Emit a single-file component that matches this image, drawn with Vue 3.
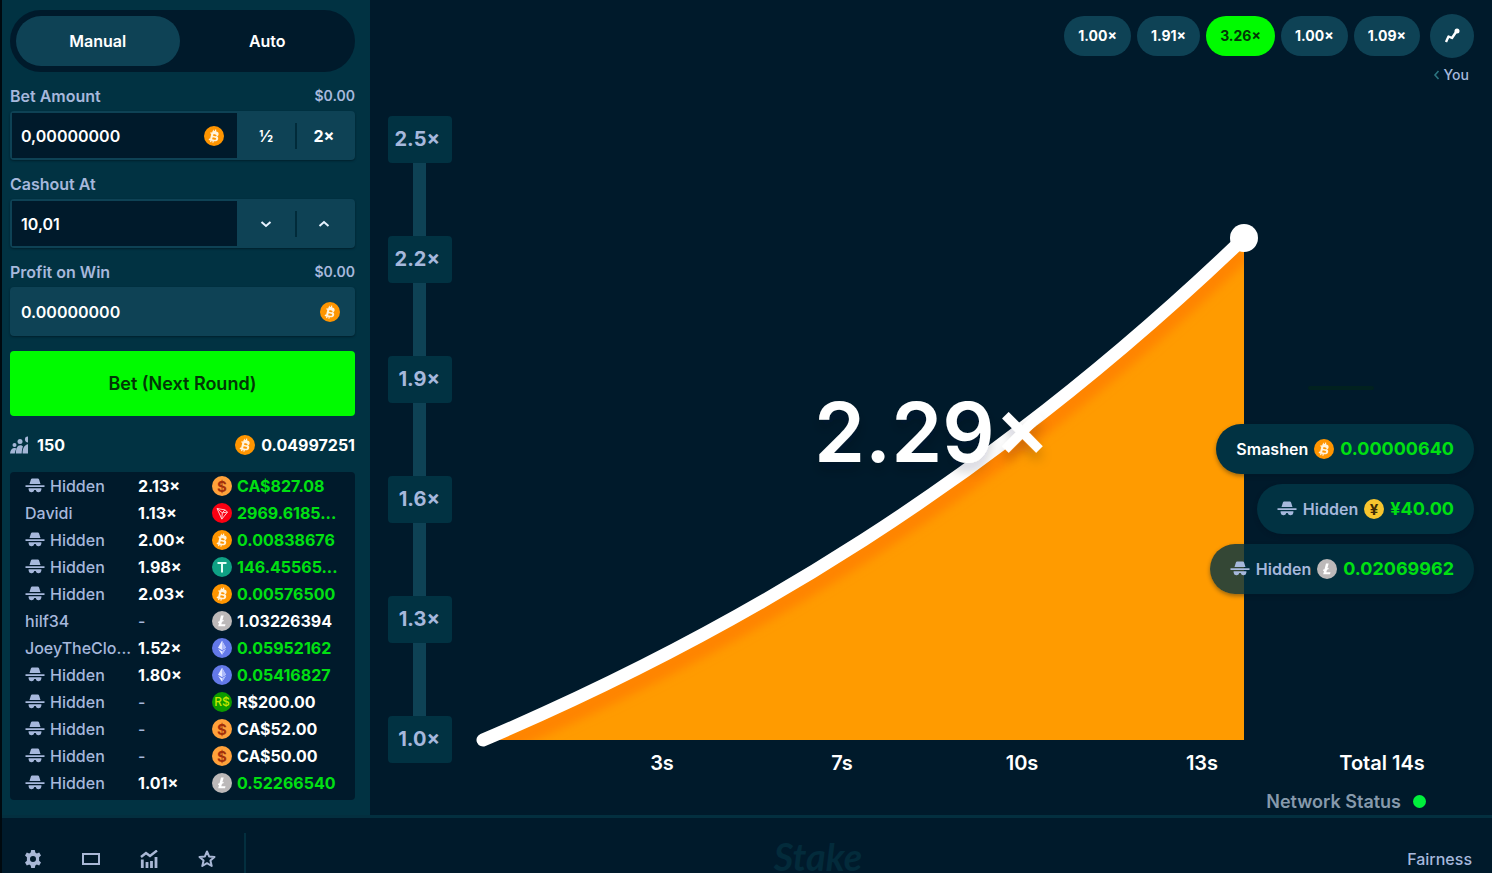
<script setup>
import { ref, h } from 'vue'

const bet = ref('0,00000000')
const cashout = ref('10,01')
const profit = ref('0.00000000')

const COINS = {
  btc: { bg: '#ff9500', fg: '#fff3dc', d: 'M8.6 4.9l-.4 1.7-1.7-.3-.2 1.2 1 .3-1.2 5-1-.2-.5 1.3 1.8.5-.4 1.6 1.2.3.4-1.6 1 .2-.4 1.6 1.2.3.4-1.6c2.2.3 3.800-.1 4.300-2 .4-1.500-.1-2.400-1.100-3 .9-.2 1.500-.8 1.600-2 .2-1.600-.9-2.300-2.600-2.900l.4-1.600-1.200-.3-.4 1.600-1-.2.4-1.600zM9.600 8l1.800.4c1.800.5 1.400 2.200-.3 1.900l-2.100-.5zM8.700 11.200l2.300.6c1.900.5 1.500 2.400-.5 2l-2.400-.6z' },
  cad: { bg: '#ffa13a', fg: '#a3300b', text: '$' },
  trx: { bg: '#fb0012', fg: '#ffc9cc', line: 'M5 5.500l8 1.400 2.500 2.200-5.700 7zM5 5.500l5.300 4.300-.5 6.300M10.300 9.800L13 6.900M10.300 9.800l5.200-.7' },
  usdt: { bg: '#0fa184', fg: '#e4fff6', line: 'M5.500 6h9M10 6v9.500' },
  ltc: { bg: '#bcb9b9', fg: '#ffffff', d: 'M9 4.500h2.700l-1.300 4.800 1.400-.5-.4 1.500-1.400.5-.7 2.400h4.200l-.5 2H6.200l.9-3.500-1.200.4.4-1.500 1.200-.4z' },
  eth: { bg: '#6379e8', fg: '#e8ecff', d: 'M10 2.800l4 6.900-4 2.300-4-2.300zM6.200 11l3.800 2.200L13.800 11 10 16.800z' },
  brl: { bg: '#0c9a00', fg: '#c4e800', text: 'R$' },
  jpy: { bg: '#f7c52e', fg: '#3d2b05', text: '¥' },
  none: { bg: '#d5e2e6', fg: '#ffffff' }
}

const Coin = (props) => {
  const c = COINS[props.type]
  const inner = [h('circle', { cx: 10, cy: 10, r: 10, fill: c.bg })]
  if (c.d) inner.push(h('path', { d: c.d, fill: c.fg, 'fill-rule': 'evenodd' }))
  if (props.type === 'eth') inner.push(h('path', { d: 'M10 2.800v9.200l4-2.300zM10 13.200v3.600l3.800-5.800z', fill: '#aebafa' }))
  if (c.line) inner.push(h('path', { d: c.line, fill: 'none', stroke: c.fg, 'stroke-width': props.type === 'usdt' ? 2 : 1 }))
  if (c.text) {
    inner.push(h('text', {
      x: 10, y: c.text.length > 1 ? 14 : 15.500, 'text-anchor': 'middle', fill: c.fg,
      'font-size': c.text.length > 1 ? 12 : 15, 'font-weight': c.text.length > 1 ? 500 : 700, 'font-family': 'Inter, sans-serif'
    }, c.text))
  }
  return h('svg', { viewBox: '0 0 20 20', width: 20, height: 20, 'aria-hidden': 'true' }, inner)
}
Coin.props = ['type']

const Spy = () => h('svg', { viewBox: '0 0 20 16', width: 20, height: 16, fill: 'currentColor', 'aria-hidden': 'true' }, [
  h('path', { d: 'M5.900 1.600Q6.200.6 7.200.6h5.600q1 0 1.300 1L15.500 6h-11zM.5 7.300h19v1.700H.5zM3.600 10.200h12.800v1.300a2.900 2.900 0 0 1-5.700.6H9.300a2.900 2.900 0 0 1-5.700-.6z' })
])

const rows = [
  { m: '2.13×', c: 'cad', a: 'CA$827.08', win: true },
  { n: 'Davidi', m: '1.13×', c: 'trx', a: '2969.6185...', win: true },
  { m: '2.00×', c: 'btc', a: '0.00838676', win: true },
  { m: '1.98×', c: 'usdt', a: '146.45565...', win: true },
  { m: '2.03×', c: 'btc', a: '0.00576500', win: true },
  { n: 'hilf34', c: 'ltc', a: '1.03226394' },
  { n: 'JoeyTheClo...', m: '1.52×', c: 'eth', a: '0.05952162', win: true },
  { m: '1.80×', c: 'eth', a: '0.05416827', win: true },
  { c: 'brl', a: 'R$200.00' },
  { c: 'cad', a: 'CA$52.00' },
  { c: 'cad', a: 'CA$50.00' },
  { m: '1.01×', c: 'ltc', a: '0.52266540', win: true }
]

const rounds = ['1.00×', '1.91×', '3.26×', '1.00×', '1.09×']
const yTicks = ['2.5×', '2.2×', '1.9×', '1.6×', '1.3×', '1.0×']
const xTicks = ['3s', '7s', '10s', '13s', 'Total 14s']
const cashouts = [
  { n: 'Smashen', c: 'btc', a: '0.00000640' },
  { c: 'jpy', a: '¥40.00' },
  { c: 'ltc', a: '0.02069962', faded: true }
]
</script>

<template>
  <div class="app">
    <div class="game">
      <aside class="sidebar">
        <div class="tabs">
          <button type="button" class="tab active">Manual</button>
          <button type="button" class="tab">Auto</button>
        </div>

        <div class="label-row"><label for="bet">Bet Amount</label><span class="fiat">$0.00</span></div>
        <div class="field">
          <div class="entry">
            <input id="bet" v-model="bet" type="text" />
            <Coin type="btc" />
          </div>
          <button type="button" class="side">½</button>
          <button type="button" class="side split">2×</button>
        </div>

        <div class="label-row"><label for="cashout">Cashout At</label></div>
        <div class="field">
          <div class="entry"><input id="cashout" v-model="cashout" type="text" /></div>
          <button type="button" class="side" aria-label="Decrease">
            <svg width="12" height="8" viewBox="0 0 12 8"><path d="M1.500 2L6 6l4.500-4" fill="none" stroke="#e6f2ff" stroke-width="2" /></svg>
          </button>
          <button type="button" class="side split" aria-label="Increase">
            <svg width="12" height="8" viewBox="0 0 12 8"><path d="M1.500 6L6 2l4.500 4" fill="none" stroke="#e6f2ff" stroke-width="2" /></svg>
          </button>
        </div>

        <div class="label-row"><label for="profit">Profit on Win</label><span class="fiat">$0.00</span></div>
        <div class="field readonly">
          <div class="entry">
            <input id="profit" v-model="profit" type="text" readonly />
            <Coin type="btc" />
          </div>
        </div>

        <button type="button" class="bet">Bet (Next Round)</button>

        <div class="stats">
          <svg class="crowd" width="18" height="18" viewBox="0 0 18 18" fill="#a3b5d6">
            <circle cx="4.500" cy="9" r="2" /><circle cx="10" cy="5.500" r="2.500" /><path d="M15 3a2.500 2.500 0 0 1 3-2.500v6A3 3 0 0 1 15 3z" />
            <path d="M0 17.500c.3-3.500 2-5.500 4.500-5.500 1 0 1.500.3 2 .8-1 1.300-1.500 3-1.700 4.700zM5.800 17.500c.2-5 1.600-8.300 4.500-8.300 1.100 0 2 .5 2.700 1.300-.9 2-1.200 4.500-1.300 7zM12.600 17.500c0-5.500 1.900-8.700 5.400-9.300v9.300z" />
          </svg>
          <span>150</span>
          <span class="pool"><Coin type="btc" />0.04997251</span>
        </div>

        <div class="bets">
          <table>
            <tbody>
              <tr v-for="(r, i) in rows" :key="i">
                <td class="who"><span class="cell"><template v-if="r.n">{{ r.n }}</template><template v-else><Spy />Hidden</template></span></td>
                <td class="mult" :class="{ none: !r.m }">{{ r.m || '-' }}</td>
                <td class="amt" :class="{ win: r.win }"><span class="cell"><Coin :type="r.c" />{{ r.a }}</span></td>
              </tr>
              <tr><td></td><td></td><td><span class="cell"><Coin type="none" /></span></td></tr>
            </tbody>
          </table>
        </div>
      </aside>

      <main class="stage">
        <div class="history">
          <button v-for="(r, i) in rounds" :key="i" type="button" class="round" :class="{ hit: i === 2 }">{{ r }}</button>
          <button type="button" class="trend" aria-label="Trends">
            <svg width="18" height="18" viewBox="0 0 18 18"><path d="M3 15l2.500-5.500L9 11l4-6" fill="none" stroke="#fff" stroke-width="2.400" stroke-linejoin="round" /><circle cx="14" cy="4" r="2.500" fill="#fff" /></svg>
          </button>
        </div>
        <div class="you">
          <svg width="7" height="10" viewBox="0 0 7 10"><path d="M5.500 1L2 5l3.500 4" fill="none" stroke="#2b7480" stroke-width="1.600" /></svg>
          <span>You</span>
        </div>

        <div class="chart">
          <div class="y-axis"><span v-for="t in yTicks" :key="t">{{ t }}</span></div>
          <div class="plot">
            <svg class="curve" viewBox="0 0 1040 634">
              <defs>
                <clipPath id="area"><path d="M31 624C285 516 538 366 792 122V624Z" /></clipPath>
                <filter id="soft" x="-10%" y="-10%" width="120%" height="120%"><feGaussianBlur stdDeviation="5" /></filter>
                <filter id="drop" x="-10%" y="-20%" width="120%" height="160%"><feDropShadow dx="0" dy="8" stdDeviation="6" flood-color="#001020" flood-opacity="0.2" /></filter>
              </defs>
              <path d="M31 624C285 516 538 366 792 122V624Z" fill="#ff9b00" />
              <g clip-path="url(#area)">
                <path d="M31 636C285 528 538 378 792 134" fill="none" stroke="#ff8400" stroke-width="20" filter="url(#soft)" />
              </g>
              <path d="M31 624C285 516 538 366 792 122" fill="none" stroke="#fff" stroke-width="13" stroke-linecap="round" />
              <circle cx="792" cy="122" r="14" fill="#fff" />
              <text class="now" x="362" y="346" filter="url(#drop)">2.29×</text>
            </svg>
            <div class="x-axis"><span v-for="t in xTicks" :key="t">{{ t }}</span></div>
          </div>
          <div class="cashouts">
            <i class="fading"></i>
            <div v-for="(c, i) in cashouts" :key="i" class="bubble" :class="{ faded: c.faded }">
              <Spy v-if="!c.n" />
              <span :class="{ named: c.n }">{{ c.n || 'Hidden' }}</span>
              <Coin :type="c.c" />
              <b>{{ c.a }}</b>
            </div>
          </div>
        </div>

        <div class="network">Network Status<i></i></div>
      </main>
    </div>

    <footer class="footer">
      <div class="tools">
        <button type="button" aria-label="Settings">
          <svg width="18" height="18" viewBox="0 0 18 18"><path fill="#a9b8d6" fill-rule="evenodd" d="M7.200 0h3.600l.5 2.500 1.500.9 2.400-.9L17 5.600l-1.900 1.700v1.700 1.700l1.900 1.700-1.800 3.100-2.400-.9-1.500.9-.5 2.500H7.200l-.5-2.500-1.500-.9-2.400.9L1 12.400l1.900-1.700V7.300L1 5.600l1.800-3.100 2.400.9 1.500-.9zM9 6a3 3 0 1 0 0 6 3 3 0 0 0 0-6z" /></svg>
        </button>
        <button type="button" aria-label="Theatre">
          <svg width="18" height="18" viewBox="0 0 18 18"><path fill="none" stroke="#a9b8d6" stroke-width="2" d="M1 4h16v10H1z" /></svg>
        </button>
        <button type="button" aria-label="Live stats">
          <svg width="18" height="18" viewBox="0 0 18 18" fill="none" stroke="#a9b8d6"><path stroke-width="2.400" d="M1 7l5-4 4 3 7-5.500" /><path stroke-width="2.800" d="M2.300 9.500V18M7 12v6M11.500 11v7M16 7v11" /></svg>
        </button>
        <button type="button" aria-label="Favourite">
          <svg width="18" height="18" viewBox="0 0 18 18"><path fill="none" stroke="#a9b8d6" stroke-width="2" stroke-linejoin="round" d="M9 1.500l2.100 4.900 5.400.5-4.100 3.600 1.300 5.500L9 13.200 4.300 16l1.300-5.500L1.500 6.900l5.400-.5z" /></svg>
        </button>
      </div>
      <span class="brand">Stake</span>
      <a href="#" class="fairness">Fairness</a>
    </footer>
  </div>
</template>

<style>
body {
  margin: 0;
  background: #001a2b;
}
</style>

<style scoped>
* {
  box-sizing: border-box;
}

.app {
  display: flex;
  flex-direction: column;
  height: 100vh;
  overflow: hidden;
  border-left: 2px solid #00090f;
  background: #001a2b;
  color: #fff;
  font: 600 16px/20px Inter, "Open Sans", sans-serif;
}

button,
input {
  border: 0;
  margin: 0;
  padding: 0;
  background: none;
  color: inherit;
  font: inherit;
}

svg {
  display: block;
  flex: none;
}

.game {
  display: grid;
  grid-template-columns: 368px 1fr;
  flex: none;
}

.sidebar {
  padding: 10px 15px 15px 8px;
  background: #013242;
}

.tabs {
  display: grid;
  grid-template-columns: 1fr 1fr;
  gap: 6px;
  height: 62px;
  padding: 6px;
  border-radius: 31px;
  background: #001a2b;
}

.tab {
  border-radius: 25px;
}

.tab.active {
  background: #0e4255;
}

.label-row {
  display: flex;
  align-items: center;
  justify-content: space-between;
  height: 39px;
  padding-top: 8px;
  color: #a6b8dc;
}

.fiat {
  font-size: 14px;
}

.field {
  display: flex;
  height: 49px;
  border: 2px solid #0e4255;
  border-radius: 4px;
  background: #0e4255;
  box-shadow: 0 1px 2px #00202c;
}

.entry {
  display: flex;
  flex: 1;
  align-items: center;
  min-width: 0;
  padding: 0 13px 0 9px;
  background: #001a2b;
}

.readonly .entry {
  background: none;
}

.entry input {
  flex: 1;
  width: 100%;
  min-width: 0;
}

.side {
  display: flex;
  align-items: center;
  justify-content: center;
  position: relative;
  width: 58px;
  font-weight: 700;
}

.split::before {
  content: "";
  position: absolute;
  left: 0;
  top: 10px;
  width: 2px;
  height: 26px;
  background: #012b3a;
}

.bet {
  display: block;
  width: 100%;
  height: 65px;
  margin-top: 15px;
  border-radius: 4px;
  background: #00fb00;
  color: #023606;
  font-size: 18px;
}

.stats {
  display: flex;
  align-items: center;
  gap: 9px;
  height: 56px;
  padding-top: 2px;
  font-weight: 700;
}

.pool {
  display: flex;
  gap: 6px;
  margin-left: auto;
}

.bets {
  height: 328px;
  overflow: hidden;
  border-radius: 4px;
  background: #001a2b;
}

table {
  width: 100%;
  table-layout: fixed;
  border-collapse: collapse;
}

td {
  height: 27px;
  padding: 0;
  font-weight: 700;
  white-space: nowrap;
}

td:first-child {
  width: 128px;
  padding-left: 15px;
}

td:nth-child(2) {
  width: 74px;
}

td.who,
td.none {
  color: #a6b8dc;
  font-weight: 500;
}

.cell {
  display: flex;
  align-items: center;
  gap: 5px;
}

.win {
  color: #00e012;
}

.stage {
  display: flex;
  flex-direction: column;
  min-width: 0;
}

.history {
  display: flex;
  align-items: center;
  justify-content: flex-end;
  gap: 6px;
  height: 44px;
  margin: 14px 18px 0;
}

.round {
  height: 40px;
  padding: 0 14px;
  border-radius: 20px;
  background: #0e4255;
  font-size: 14px;
  font-weight: 700;
}

.round.hit {
  background: #00fb00;
  color: #023606;
}

.trend {
  display: flex;
  align-items: center;
  justify-content: center;
  width: 44px;
  height: 44px;
  margin-left: 4px;
  border-radius: 50%;
  background: #0e4255;
}

.you {
  display: flex;
  align-items: center;
  justify-content: flex-end;
  gap: 4px;
  height: 34px;
  margin: 0 23px 24px;
  color: #a6b8dc;
  font-size: 14px;
  font-weight: 500;
}

.chart {
  display: grid;
  grid-template-columns: 64px 1fr;
  position: relative;
  margin-left: 18px;
}

.y-axis {
  display: flex;
  flex-direction: column;
  justify-content: space-between;
  margin-bottom: 13px;
  background: linear-gradient(#0e4255, #0e4255) 25px 0 / 13px 100% no-repeat;
  color: #a6b8dc;
  font-size: 20px;
  font-weight: 700;
}

.y-axis span {
  height: 47px;
  padding-right: 12px;
  border-radius: 4px;
  background: #013242;
  line-height: 47px;
  text-align: right;
}

.plot {
  min-width: 0;
}

.curve {
  width: 100%;
  height: auto;
}

.now {
  fill: #fff;
  font-size: 82px;
  font-weight: 600;
}

.x-axis {
  display: grid;
  grid-template-columns: repeat(5, 1fr);
  padding: 0 20px 0 120px;
  font-size: 20px;
  line-height: 26px;
  text-align: center;
}

.cashouts {
  display: flex;
  flex-direction: column;
  align-items: flex-end;
  gap: 10px;
  position: absolute;
  right: 18px;
  top: 270px;
}

.fading {
  width: 66px;
  height: 4px;
  margin: 0 100px 24px;
  border-radius: 2px;
  background: #01211f;
}

.bubble {
  display: flex;
  align-items: center;
  gap: 6px;
  height: 50px;
  padding: 0 20px;
  border-radius: 25px;
  background: #013242;
  box-shadow: 0 2px 4px #00142266;
  color: #a6b8dc;
}

.bubble.faded {
  background: #013242cc;
}

.named {
  color: #fff;
}

.bubble b {
  color: #00e012;
  font-size: 18px;
  font-weight: 700;
}

.network {
  display: flex;
  align-items: center;
  justify-content: flex-end;
  gap: 12px;
  height: 39px;
  padding: 12px 66px 0 0;
  color: #8699ab;
  font-size: 18px;
}

.network i {
  width: 13px;
  height: 13px;
  border-radius: 50%;
  background: #00f03c;
}

.footer {
  display: grid;
  grid-template-columns: 1fr auto 1fr;
  flex: 1 0 60px;
  border-top: 3px solid #032f3f;
}

.tools {
  display: flex;
  align-items: flex-start;
  gap: 40px;
  justify-self: start;
  margin-top: 15px;
  padding: 17px 28px 0 22px;
  border-right: 2px solid #032f3f;
}

.brand {
  padding: 14px 0 0 142px;
  color: #032b3b;
  font: italic 700 38px/48px Lato, sans-serif;
}

.fairness {
  justify-self: end;
  padding: 31px 20px 0 0;
  color: #a6b8dc;
  font-weight: 500;
  text-decoration: none;
}
</style>
